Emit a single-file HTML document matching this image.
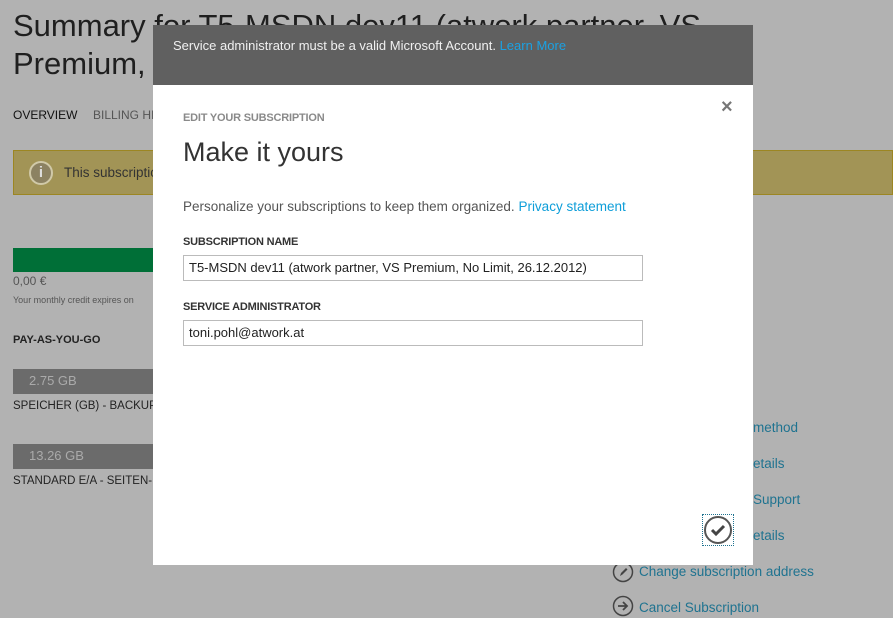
<!DOCTYPE html>
<html><head><meta charset="utf-8"><style>
*{margin:0;padding:0;box-sizing:border-box}
body{width:893px;height:618px;overflow:hidden;background:#b2b2b2;font-family:"Liberation Sans",sans-serif;position:relative;color:#222}
.a{position:absolute;white-space:nowrap}
.link{color:#1f7390;font-size:13.5px}
</style></head><body>
<div class="a" style="left:13px;top:7px;font-size:31px;line-height:38px;color:#1f1f1f">Summary for T5-MSDN dev11 (atwork partner, VS<br>Premium, No Limit</div>
<div class="a" style="left:13px;top:108px;font-size:12px;color:#111">OVERVIEW</div>
<div class="a" style="left:93px;top:108px;font-size:12px;color:#555">BILLING HISTORY</div>
<div class="a" style="left:13px;top:150px;width:880px;height:45px;background:#a29456;border:1px solid #9c8622"></div>
<div class="a" style="left:29px;top:161px;width:24px;height:24px;border:2px solid #d0c9a8;border-radius:50%;background:#8c8262;color:#ddd;font-weight:bold;font-size:15px;text-align:center;line-height:20px">i</div>
<div class="a" style="left:64px;top:165px;font-size:13.5px;color:#333">This subscription</div>
<div class="a" style="left:13px;top:248px;width:150px;height:24px;background:#006f37"></div>
<div class="a" style="left:13px;top:274px;font-size:12px;color:#555">0,00 €</div>
<div class="a" style="left:13px;top:295px;font-size:9px;color:#555">Your monthly credit expires on</div>
<div class="a" style="left:13px;top:334px;font-size:11px;font-weight:bold;color:#222">PAY-AS-YOU-GO</div>
<div class="a" style="left:13px;top:369px;width:150px;height:25px;background:#6b6b6b;color:#aaa;font-size:13px;padding:4px 0 0 16px">2.75 GB</div>
<div class="a" style="left:13px;top:400px;font-size:11.5px;color:#222">SPEICHER (GB) - BACKUP</div>
<div class="a" style="left:13px;top:444px;width:150px;height:25px;background:#6b6b6b;color:#aaa;font-size:13px;padding:4px 0 0 16px">13.26 GB</div>
<div class="a" style="left:13px;top:475px;font-size:11.5px;color:#222">STANDARD E/A - SEITEN-BLOB</div>
<div class="a" style="left:745px;top:374px;font-size:14px;color:#333">4</div>
<div class="a link" style="left:753px;top:420px">method</div>
<div class="a link" style="left:753px;top:456px">etails</div>
<div class="a link" style="left:753px;top:492px">Support</div>
<div class="a link" style="left:753px;top:528px">etails</div>
<svg class="a" style="left:612px;top:561px" width="22" height="22"><circle cx="11" cy="11" r="9.5" fill="none" stroke="#444" stroke-width="1.5"/><path d="M8 15l1-3 5-5 1.5 1.5-5 5z" fill="#444"/></svg>
<div class="a link" style="left:639px;top:564px">Change subscription address</div>
<svg class="a" style="left:612px;top:595px" width="22" height="22"><circle cx="11" cy="11" r="9.5" fill="none" stroke="#444" stroke-width="1.5"/><path d="M6 11h9M11 7l4 4-4 4" fill="none" stroke="#444" stroke-width="1.8"/></svg>
<div class="a link" style="left:639px;top:600px">Cancel Subscription</div>

<div class="a" style="left:153px;top:25px;width:600px;height:60px;background:#606060"></div>
<div class="a" style="left:173px;top:38px;font-size:13px;color:#f0f0f0">Service administrator must be a valid Microsoft Account. <span style="color:#1ba1e2">Learn More</span></div>
<div class="a" style="left:153px;top:85px;width:600px;height:480px;background:#fff"></div>
<div class="a" style="left:721px;top:96px;font-size:20px;color:#777;font-weight:bold">×</div>
<div class="a" style="left:183px;top:112px;font-size:11px;font-weight:bold;color:#8a8a8a;letter-spacing:-0.2px">EDIT YOUR SUBSCRIPTION</div>
<div class="a" style="left:183px;top:137px;font-size:27px;color:#333">Make it yours</div>
<div class="a" style="left:183px;top:199px;font-size:13.5px;color:#555">Personalize your subscriptions to keep them organized. <span style="color:#0e9ed9">Privacy statement</span></div>
<div class="a" style="left:183px;top:236px;font-size:11px;font-weight:bold;color:#333;letter-spacing:-0.2px">SUBSCRIPTION NAME</div>
<div class="a" style="left:183px;top:255px;width:460px;height:26px;border:1px solid #bbb;font-size:13px;padding:4px 5px;color:#222">T5-MSDN dev11 (atwork partner, VS Premium, No Limit, 26.12.2012)</div>
<div class="a" style="left:183px;top:301px;font-size:11px;font-weight:bold;color:#333;letter-spacing:-0.2px">SERVICE ADMINISTRATOR</div>
<div class="a" style="left:183px;top:320px;width:460px;height:26px;border:1px solid #bbb;font-size:13px;padding:4px 5px;color:#222">toni.pohl@atwork.at</div>
<div class="a" style="left:702px;top:514px;width:32px;height:32px;border:1px dotted #1f7390"></div>
<svg class="a" style="left:703px;top:515px" width="30" height="30"><circle cx="15" cy="15" r="13" fill="none" stroke="#555" stroke-width="2"/><path d="M9 15l4 4 8-8" fill="none" stroke="#444" stroke-width="3"/></svg>
</body></html>
